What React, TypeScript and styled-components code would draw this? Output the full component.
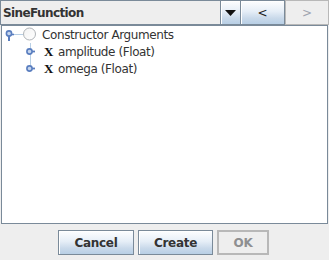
import React from 'react';
import styled, {createGlobalStyle} from "styled-components";

const GlobalStyle = createGlobalStyle`
    html, body {
        margin: 0;
        padding: 0;
        background: #eeeeee;
    }
    body {
        font-family: "DejaVu Sans", "Liberation Sans", sans-serif;
        font-size: 12px;
        color: #333333;
    }
`

const oceanGradient = `linear-gradient(180deg, #fdfeff 0%, #e6eef7 45%, #c9d9ea 75%, #b8cfe5 100%)`

type TreeNode = {
    label: string
    depth: number
    kind: "root" | "arg"
    last?: boolean
}

const nodes: TreeNode[] = [
    {label: "Constructor Arguments", depth: 0, kind: "root"},
    {label: "amplitude (Float)", depth: 1, kind: "arg"},
    {label: "omega (Float)", depth: 1, kind: "arg", last: true},
]

const Handle = (props: { node: TreeNode }) => {
    if (props.node.depth === 0) {
        // expanded handle: knob with a stem pointing down
        return (
            <svg width="20" height="17" viewBox="0 0 20 17">
                <line x1="10" y1="8.5" x2="20" y2="8.5" stroke="#b8cfe5"/>
                <line x1="6" y1="10" x2="6" y2="15" stroke="#5a7ebf" strokeWidth="2"/>
                <line x1="7.5" y1="8.5" x2="11" y2="8.5" stroke="#5a7ebf" strokeWidth="1.6"/>
                <circle cx="6" cy="7.5" r="2.6" fill="#c6d6ee" stroke="#5a7ebf" strokeWidth="1.6"/>
            </svg>
        )
    }
    // collapsed handle: knob with a stem pointing right
    return (
        <svg width="40" height="17" viewBox="0 0 40 17">
            <line x1="27.5" y1="0" x2="27.5" y2={props.node.last ? 8 : 17} stroke="#b8cfe5"/>
            <line x1="28" y1="8.5" x2="32" y2="8.5" stroke="#5a7ebf" strokeWidth="1.8"/>
            <circle cx="26.5" cy="8.5" r="2.6" fill="#c6d6ee" stroke="#5a7ebf" strokeWidth="1.6"/>
        </svg>
    )
}

const RootIcon = () => (
    <svg width="14" height="17" viewBox="0 0 14 17">
        <defs>
            <linearGradient id="rg" x1="0" y1="0" x2="1" y2="1">
                <stop offset="0" stopColor="#f2f2f2"/>
                <stop offset="1" stopColor="#ffffff"/>
            </linearGradient>
        </defs>
        <circle cx="6.5" cy="8" r="6" fill="url(#rg)" stroke="#b0b4b8"/>
    </svg>
)

export default function App() {
    return (
        <StyledDialog>
            <GlobalStyle/>
            <TopBar>
                <Combo>
                    <ComboText>SineFunction</ComboText>
                    <ArrowButton>
                        <svg width="11" height="6" viewBox="0 0 11 6">
                            <polygon points="0,0 11,0 5.5,6" fill="#111"/>
                        </svg>
                    </ArrowButton>
                </Combo>
                <NavButton>&lt;</NavButton>
                <NavButton disabled>&gt;</NavButton>
            </TopBar>

            <TreePanel>
                {nodes.map((n) => (
                    <TreeRow key={n.label}>
                        <Handle node={n}/>
                        {n.kind === "root" ? <RootIcon/> : <ArgIcon>X</ArgIcon>}
                        <RowLabel gap={n.kind === "root" ? 5 : 4}>{n.label}</RowLabel>
                    </TreeRow>
                ))}
            </TreePanel>

            <ButtonRow>
                <DialogButton width={76}>Cancel</DialogButton>
                <DialogButton width={75}>Create</DialogButton>
                <DialogButton width={52} disabled>OK</DialogButton>
            </ButtonRow>
        </StyledDialog>
    );
}

const StyledDialog = styled.div`
    width: 329px;
    height: 260px;
    display: flex;
    flex-direction: column;
    background: #eeeeee;
`

const TopBar = styled.div`
    display: flex;
    height: 25px;
`

const Combo = styled.div`
    display: flex;
    width: 241px;
    box-sizing: border-box;
    border: 1px solid #7a8a99;
    background: #eeeeee;
`

const ComboText = styled.div`
    flex: 1;
    display: flex;
    align-items: center;
    padding-left: 2px;
    font-weight: bold;
    font-size: 12px;
    letter-spacing: -0.6px;
    color: #333333;
`

const ArrowButton = styled.div`
    width: 19px;
    display: flex;
    align-items: center;
    justify-content: center;
    border-left: 1px solid #7a8a99;
    background: ${oceanGradient};
    box-shadow: inset 1px 1px 0 #ffffff;
`

const NavButton = styled.div<{ disabled?: boolean }>`
    width: 44px;
    box-sizing: border-box;
    display: flex;
    align-items: center;
    justify-content: center;
    font-size: 12px;
    border: 1px solid ${props => props.disabled ? "#b8b8b8" : "#7a8a99"};
    border-left: ${props => props.disabled ? "1px solid #b8b8b8" : "none"};
    color: ${props => props.disabled ? "#a0a4b0" : "#222222"};
    background: ${props => props.disabled ? "#eeeeee" : oceanGradient};
    box-shadow: ${props => props.disabled ? "none" : "inset 1px 1px 0 #ffffff"};
`

const TreePanel = styled.div`
    margin: 0 1px 0 1px;
    height: 199px;
    box-sizing: border-box;
    border: 1px solid #7a8a99;
    background: #ffffff;
    padding-left: 1px;
`

const TreeRow = styled.div`
    display: flex;
    align-items: center;
    height: 17px;
`

const ArgIcon = styled.span`
    font-family: "Liberation Serif", serif;
    font-weight: bold;
    font-size: 13px;
    color: #111111;
    width: 10px;
    margin-left: 1px;
`

const RowLabel = styled.span<{ gap: number }>`
    margin-left: ${props => props.gap}px;
    font-size: 12px;
    letter-spacing: -0.4px;
    color: #333333;
    white-space: nowrap;
`

const ButtonRow = styled.div`
    display: flex;
    justify-content: center;
    gap: 4px;
    padding-top: 6px;
    padding-right: 2px;
`

const DialogButton = styled.div<{ width: number, disabled?: boolean }>`
    width: ${props => props.width}px;
    height: 25px;
    box-sizing: border-box;
    display: flex;
    align-items: center;
    justify-content: center;
    font-weight: bold;
    font-size: 12px;
    letter-spacing: -0.3px;
    border: 1px solid ${props => props.disabled ? "#b8b8b8" : "#7a8a99"};
    color: ${props => props.disabled ? "#8e8f91" : "#333333"};
    background: ${props => props.disabled ? "#eeeeee" : oceanGradient};
    box-shadow: ${props => props.disabled ? "inset 0 0 0 1px #b8b8b8" : "inset 1px 1px 0 #ffffff"};
`
